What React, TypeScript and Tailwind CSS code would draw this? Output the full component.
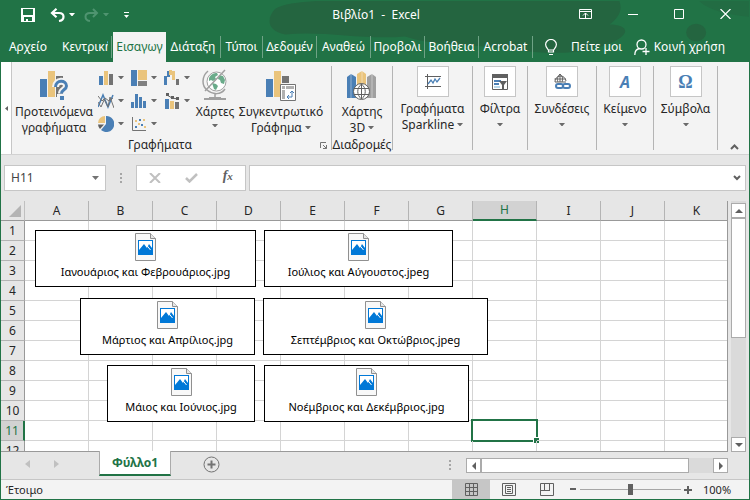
import { ReactNode, useState } from 'react';

interface SheetImage {
  name: string;
  place: string;
}

const columns = ['A', 'B', 'C', 'D', 'E', 'F', 'G', 'H', 'I', 'J', 'K'];
const rows = [1, 2, 3, 4, 5, 6, 7, 8, 9, 10, 11, 12];

const tabs = [
  { label: 'Διάταξη', width: 'w-[55px]' },
  { label: 'Τύποι', width: 'w-[42px]' },
  { label: 'Δεδομέν', width: 'w-[54px]' },
  { label: 'Αναθεώ', width: 'w-[54px]' },
  { label: 'Προβολι', width: 'w-[54px]' },
  { label: 'Βοήθεια', width: 'w-[54px]' },
  { label: 'Acrobat', width: 'w-[54px]' },
];

// Embedded files, placed freely over the cells
const images: SheetImage[] = [
  { name: 'Ιανουάριος και Φεβρουάριος.jpg', place: 'left-[34px] top-[29px] w-[221px]' },
  { name: 'Ιούλιος και Αύγουστος.jpeg', place: 'left-[263px] top-[29px] w-[189px]' },
  { name: 'Μάρτιος και Απρίλιος.jpg', place: 'left-[79px] top-[97px] w-[175px]' },
  { name: 'Σεπτέμβριος και Οκτώβριος.jpeg', place: 'left-[262px] top-[97px] w-[225px]' },
  { name: 'Μάιος και Ιούνιος.jpg', place: 'left-[106px] top-[164px] w-[148px]' },
  { name: 'Νοέμβριος και Δεκέμβριος.jpg', place: 'left-[263px] top-[164px] w-[205px]' },
];

function Caret({ className = 'text-[#6a6a6a]' }: { className?: string }) {
  return (
    <svg width="6" height="4" viewBox="0 0 6 4" className={`inline-block shrink-0 ${className}`}>
      <path d="M0 0h6L3.500 3h-1z" fill="currentColor" />
    </svg>
  );
}

function FileIcon() {
  return (
    <svg width="21" height="28" viewBox="0 0 21 28">
      <path d="M.5.5h15l5 5v22H.5z" fill="#f8f8f8" stroke="#909090" />
      <path d="M15.5.5v5h5" fill="#e6e6e6" stroke="#909090" />
      <path d="M3 7h15v15H3z" fill="#0078d7" />
      <path d="M4 8h13v9H4z" fill="#fff" />
      <path d="m4 17 5-6 3 4 2-4 3 4v3H4z" fill="#0078d7" />
      <path d="m11.500 12 4 5" stroke="#fff" />
    </svg>
  );
}

function SmallChart({ label, children }: { label: string; children: ReactNode }) {
  return (
    <button type="button" aria-label={label} className="flex h-[23px] w-[33px] items-center gap-1">
      <svg width="16" height="16" viewBox="0 0 16 16" fill="none">
        {children}
      </svg>
      <Caret />
    </button>
  );
}

function BoxedGroup({ label, width, children }: { label: string; width: string; children: ReactNode }) {
  return (
    <div className={`my-1 shrink-0 border-r border-[#b4b4b4] ${width}`}>
      <button type="button" className="flex w-full flex-col items-center">
        <span className="flex h-[31px] w-8 items-center justify-center border border-[#c6c6c6] bg-white">
          {children}
        </span>
        <span className="mt-1 leading-4">{label}</span>
        <Caret className="mt-[6px] text-[#6a6a6a]" />
      </button>
    </div>
  );
}

function ScrollButton({ label, path, className }: { label: string; path: string; className: string }) {
  return (
    <button
      type="button"
      aria-label={label}
      className={`flex size-[15px] shrink-0 items-center justify-center border border-[#ababab] bg-white ${className}`}
    >
      <svg width="8" height="8" viewBox="0 0 8 8" fill="#606060">
        <path d={path} />
      </svg>
    </button>
  );
}

function TitleBar() {
  return (
    <div className="relative flex h-[31px] items-center">
      <div className="flex flex-1 items-center pl-5 pb-1">
        <button type="button" aria-label="Αποθήκευση">
          <svg width="14" height="14" viewBox="0 0 14 14" fill="#fff">
            <path fillRule="evenodd" d="M0 0h14v14H0zM2 1v6h10V1zM3 9v4h2v-2h2v2h4V9z" />
          </svg>
        </button>
        <button type="button" aria-label="Αναίρεση" className="ml-[15px] flex items-center gap-1">
          <svg width="15" height="14" viewBox="0 0 15 14" fill="none" stroke="#fff" strokeWidth="2.200">
            <path d="M6.500.8 2 5l4.500 4.200" />
            <path d="M2 5h7c6 0 6 7 0 8" />
          </svg>
          <Caret className="text-white" />
        </button>
        <button type="button" aria-label="Επανάληψη" className="ml-[9px] flex items-center gap-1">
          <svg width="15" height="14" viewBox="0 0 15 14" fill="none" stroke="#4f9470" strokeWidth="2">
            <path d="m9 1 4 4-4 4" />
            <path d="M13 5H6C0 5 0 12 6 13" />
          </svg>
          <Caret className="text-[#4f9470]" />
        </button>
        <button type="button" aria-label="Προσαρμογή" className="ml-[15px]">
          <svg width="5" height="6" viewBox="0 0 5 6" fill="#fff">
            <path d="M0 0h5v1H0zM0 3h5L2.500 6z" />
          </svg>
        </button>
      </div>
      <h1 className="pb-1 text-xs">Βιβλίο1&nbsp; -&nbsp; Excel</h1>
      <div className="flex flex-1 items-center justify-end gap-9 pr-[18px] pb-[5px]">
        <button type="button" aria-label="Επιλογές κορδέλας">
          <svg width="13" height="10" viewBox="0 0 13 10" fill="none" stroke="#fff">
            <path d="M.5.5h12v9H.5zM0 2.500h13M6.500 4v5M4 6.500 6.500 4 9 6.500" />
          </svg>
        </button>
        <button type="button" aria-label="Ελαχιστοποίηση">
          <svg width="10" height="10" viewBox="0 0 10 10" stroke="#fff">
            <path d="M0 5.500h10" />
          </svg>
        </button>
        <button type="button" aria-label="Μεγιστοποίηση">
          <svg width="10" height="10" viewBox="0 0 10 10" fill="none" stroke="#fff">
            <path d="M.5.5h9v9h-9z" />
          </svg>
        </button>
        <button type="button" aria-label="Κλείσιμο">
          <svg width="11" height="10" viewBox="0 0 11 10" stroke="#fff" strokeWidth="1.200">
            <path d="m.5 0 10 10M10.500 0l-10 10" />
          </svg>
        </button>
      </div>
    </div>
  );
}

function RibbonTabs() {
  return (
    <div className="relative flex h-[30px] items-stretch">
      <button type="button" className="w-[54px] shrink-0">Αρχείο</button>
      <button type="button" className="my-1 mr-px w-[57px] shrink-0 border-r border-[#6fa386] pl-[7px] text-left">
        <span className="block w-[46px] overflow-hidden whitespace-nowrap">Κεντρική</span>
      </button>
      <button type="button" className="w-[53px] shrink-0 bg-[#f3f3f3] text-[#217346]">Εισαγωγ</button>
      {tabs.map((tab) => (
        <button
          key={tab.label}
          type="button"
          className={`my-1 shrink-0 border-r border-[#6fa386] ${tab.width}`}
        >
          {tab.label}
        </button>
      ))}
      <button type="button" className="ml-3 flex shrink-0 items-center gap-[14px]">
        <svg width="12" height="17" viewBox="0 0 12 17" fill="none" stroke="#fff" strokeWidth="1.200">
          <path d="M3.500 13v-2C2 9 .6 8 .6 5.500a5.400 5 0 0 1 10.800 0C11.400 8 10 9 8.500 11v2zM3.500 11h5M4 15.500h4" />
        </svg>
        Πείτε μοι
      </button>
      <button type="button" className="ml-auto mr-6 flex shrink-0 items-center gap-1">
        <svg width="16" height="17" viewBox="0 0 16 17" fill="none" stroke="#fff" strokeWidth="1.300">
          <circle cx="7.500" cy="5.500" r="4.500" />
          <path d="M.8 16c0-4 2-6 4.700-6.500M12 9v7M8.500 12.500h7" />
        </svg>
        Κοινή χρήση
      </button>
    </div>
  );
}

function Ribbon() {
  return (
    <div className="flex h-[93px] shrink-0 border-b border-[#d2d2d2] bg-[#f3f3f3] text-xs text-[#262626]">
      <button
        type="button"
        aria-label="Κύλιση αριστερά"
        className="flex w-[11px] shrink-0 items-center justify-center border-r border-[#c6c6c6] bg-white"
      >
        <svg width="3" height="5" viewBox="0 0 3 5" fill="#606060">
          <path d="M3 0v5L0 2.500z" />
        </svg>
      </button>

      {/* Γραφήματα */}
      <div className="my-1 flex w-80 shrink-0 flex-col border-r border-[#b4b4b4]">
        <div className="flex flex-1">
          <button type="button" className="flex w-[84px] flex-col items-center pt-[5px]">
            <svg width="28" height="29" viewBox="0 0 28 29">
              <path d="M0 8h7v18H0z" fill="#4a7fb5" />
              <path d="M8 0h7v26H8z" fill="#eac47c" />
              <path d="M16 5h7v21h-7z" fill="#737373" />
              <path
                d="M15.500 16c0-7.500 11-7.500 11-1 0 4-5 3.500-5 7.500"
                fill="none"
                stroke="#f3f3f3"
                strokeWidth="7"
              />
              <path d="M17 23h8v6h-8z" fill="#f3f3f3" />
              <path
                d="M15.500 16c0-7.500 11-7.500 11-1 0 4-5 3.500-5 7.500"
                fill="none"
                stroke="#4a7fb5"
                strokeWidth="3"
              />
              <path d="M20 25h4v4h-4z" fill="#4a7fb5" />
            </svg>
            <span className="mt-1 leading-4">
              Προτεινόμενα
              <br />
              γραφήματα
            </span>
          </button>
          <div className="ml-[2px] grid h-[69px] grid-cols-3 content-start">
            <SmallChart label="Στήλες">
              <path d="M1 6h4v9H1z" fill="#4a7fb5" />
              <path d="M6 1h4v14H6z" fill="#eac47c" />
              <path d="M11 4h4v11h-4z" fill="#737373" />
            </SmallChart>
            <SmallChart label="Ιεραρχία">
              <path d="M0 0h6v16H0z" fill="#4a7fb5" />
              <path d="M7 0h9v10H7z" fill="#eac47c" />
              <path d="M7 11h9v5H7z" fill="#808080" />
            </SmallChart>
            <SmallChart label="Καταρράκτης">
              <path d="M0 6h3v9H0zM3 1h3v6H3z" fill="#4a7fb5" />
              <path d="M5 0h3v5H5zM8 1h3v9H8z" fill="#eac47c" />
              <path d="M12 9h3v6h-3z" fill="#737373" />
            </SmallChart>
            <SmallChart label="Γραμμές">
              <path d="m0 14 5-12 5 12 5-12" stroke="#4a7fb5" strokeWidth="1.500" />
              <path d="m0 3 4 5 2-2 4 8 2-10 4 11M0 9l3 5 4-9 4 3 4-3" stroke="#737373" />
            </SmallChart>
            <SmallChart label="Στατιστική">
              <path d="M0 9h3v6H0zM4 1h3v14H4zM8 4h3v11H8zM12 8h3v7h-3z" fill="#4a7fb5" />
            </SmallChart>
            <SmallChart label="Συνδυασμός">
              <path d="M1 6h4v10H1z" fill="#4a7fb5" />
              <path d="M6 8h4v8H6z" fill="#eac47c" />
              <path d="M11 9h4v7h-4z" fill="#737373" />
              <path d="m3 2 5 3 6 1" stroke="#606060" />
              <path d="M2 0h3v3H2zM7 3h3v3H7zM12 4h3v3h-3z" fill="#606060" />
            </SmallChart>
            <SmallChart label="Πίτα">
              <path d="M8 8V0a8 8 0 1 1-5 14z" fill="#4a7fb5" />
              <path d="M7 7H0a7 7 0 0 1 7-7z" fill="#eac47c" />
              <path d="M6 8.500 2 13a8 8 0 0 1-2-4.500z" fill="#606060" />
            </SmallChart>
            <SmallChart label="Διασπορά">
              <path d="M1.500 1v13.500H15" stroke="#737373" />
              <path d="M4 10h2v2H4zM8 3h2v2H8zM10 8h2v2h-2z" fill="#4a7fb5" />
              <path d="M4 4h2v2H4zM7 7h2v2H7zM12 3h2v2h-2zM13 10h2v2h-2z" fill="#eac47c" />
            </SmallChart>
          </div>
          <button type="button" className="flex w-9 flex-col items-center pt-[3px]">
            <svg width="26" height="32" viewBox="0 0 26 32" fill="none">
              <circle cx="14.500" cy="12.500" r="9.500" fill="#fff" stroke="#a0a0a0" />
              <path
                d="M7 9c2-4 5-5 8-5l1 2-3 2 1 2-3 2-2-1-2 1zM17 6l4 1 2 4-1 4-3-1-1-3-2-1zM10 14l4 1 2 2-2 4-2-1z"
                fill="#6aab8a"
              />
              <path
                d="M23 1 3 22M6 2C-1 8 0 17 5 21c6 5 14 5 18-1M13 24v5"
                stroke="#a0a0a0"
                strokeWidth="1.500"
              />
              <path d="M7 28h12v1h5v2H2v-2h5z" fill="#a0a0a0" />
            </svg>
            <span className="mt-[3px] leading-4">Χάρτες</span>
            <Caret className="mt-1 text-[#6a6a6a]" />
          </button>
          <button type="button" className="flex w-24 flex-col items-center pt-[5px]">
            <svg width="30" height="30" viewBox="0 0 30 30">
              <path d="M0 8h7v18H0z" fill="#4a7fb5" />
              <path d="M8 0h7v26H8z" fill="#eac47c" />
              <path d="M16 5h7v7h-7z" fill="#737373" />
              <path d="M14.500 13.500h15v16h-15z" fill="#fff" stroke="#737373" />
              <path d="M16 15h3v3h-3zM20 15h8v3h-8zM16 19h3v9h-3z" fill="#b0b0b0" />
              <path d="M21 26h5v-5M23 24l-2 2 2 2M24 22l2-2 2 2" fill="none" stroke="#4a7fb5" />
            </svg>
            <span className="mt-[3px] whitespace-nowrap leading-4">
              Συγκεντρωτικό
              <br />
              Γράφημα <Caret className="mb-[2px] text-[#6a6a6a]" />
            </span>
          </button>
        </div>
        <div className="flex h-[10px] items-center">
          <span className="flex-1 pr-3 text-center leading-4">Γραφήματα</span>
          <button type="button" aria-label="Όλα τα γραφήματα" className="mr-1">
            <svg width="7" height="7" viewBox="0 0 7 7" fill="none" stroke="#737373">
              <path d="M.5 6V.5H6M3 3l3.500 3.500M6.500 3v3.500H3" />
            </svg>
          </button>
        </div>
      </div>

      {/* Διαδρομές */}
      <div className="my-1 flex w-[61px] shrink-0 flex-col items-center border-r border-[#b4b4b4]">
        <button type="button" className="flex flex-1 flex-col items-center pt-[5px]">
          <svg width="30" height="29" viewBox="0 0 30 29">
            <path d="M0 6 4 3l5 3v21H0z" fill="#4a7fb5" />
            <path d="m10 3 5-3 4 3v24h-9z" fill="#eac47c" />
            <path d="m20 6 5-3 4 3v21h-9z" fill="#a0a0a0" />
            <path d="M4 3v24M25 3v24M15 0v24" stroke="#fff" strokeOpacity=".4" />
            <circle cx="14.500" cy="20.500" r="8" fill="#fff" stroke="#606060" />
            <path
              d="M7 17.500h15M7 23.500h15M14.500 13v15M14.500 13c-5 4-5 11 0 15M14.500 13c5 4 5 11 0 15"
              fill="none"
              stroke="#606060"
            />
          </svg>
          <span className="mt-1 leading-4">
            Χάρτης
            <br />
            3D <Caret className="mb-[2px] text-[#6a6a6a]" />
          </span>
        </button>
        <span className="leading-[10px]">Διαδρομές</span>
      </div>

      <div className="my-1 w-20 shrink-0 border-r border-[#b4b4b4]">
        <button type="button" className="flex w-full flex-col items-center">
          <span className="flex h-[31px] w-8 items-center justify-center border border-[#c6c6c6] bg-white">
            <svg width="16" height="15" viewBox="0 0 16 15" fill="none" stroke="#606060">
              <path d="M2.500 0v15M0 2.500h16M0 12.500h16" />
              <path d="m3 10 3-4 2 3 2-4 2 3 3-4" stroke="#4a7fb5" strokeWidth="1.300" />
            </svg>
          </span>
          <span className="mt-1 leading-4">
            Γραφήματα
            <br />
            Sparkline <Caret className="mb-[2px] text-[#6a6a6a]" />
          </span>
        </button>
      </div>

      <BoxedGroup label="Φίλτρα" width="w-[55px]">
        <svg width="16" height="16" viewBox="0 0 16 16">
          <path d="M.5.5h15v15H.5z" fill="#fff" stroke="#606060" />
          <path d="M0 0h16v4H0z" fill="#606060" />
          <path d="M2 6h7v2H2zM2 9h5v2H2z" fill="#4a7fb5" />
          <path d="M2 12h6v2H2z" fill="#b8d8ea" />
          <path d="M7 7h8l-3 4v4h-2v-4z" fill="#606060" />
        </svg>
      </BoxedGroup>
      <BoxedGroup label="Συνδέσεις" width="w-[69px]">
        <svg width="17" height="17" viewBox="0 0 17 17" fill="none" stroke="#606060">
          <path d="M1 9a5.500 5.500 0 1 1 11-1M.5 6h11M1 9h11M6 1v8M6 1C3 4 3 7 4 9M6 1c3 3 3 5 2 8" />
          <rect x="2" y="11" width="7" height="4" rx="2" stroke="#4a7fb5" strokeWidth="2" />
          <rect x="9" y="11" width="7" height="4" rx="2" stroke="#4a7fb5" strokeWidth="2" />
        </svg>
      </BoxedGroup>
      <BoxedGroup label="Κείμενο" width="w-[57px]">
        <span className="text-base font-bold italic leading-4 text-[#4a7fb5]">A</span>
      </BoxedGroup>
      <BoxedGroup label="Σύμβολα" width="w-16">
        <span className="font-['Liberation_Serif',serif] text-lg font-bold leading-4 text-[#4a7fb5]">Ω</span>
      </BoxedGroup>
      <button type="button" aria-label="Σύμπτυξη κορδέλας" className="mt-auto mr-[10px] mb-1 ml-auto">
        <svg width="9" height="6" viewBox="0 0 9 6" fill="none" stroke="#606060" strokeWidth="2">
          <path d="m1 5 3.500-3.500L8 5" />
        </svg>
      </button>
    </div>
  );
}

function FormulaBar() {
  return (
    <div className="flex h-[46px] shrink-0 items-start px-[3px] pt-[10px] text-[#444]">
      <div className="flex h-[26px] w-[102px] shrink-0 items-center border border-[#c6c6c6] bg-white px-[6px]">
        <input
          aria-label="Πλαίσιο ονόματος"
          defaultValue="H11"
          className="w-full min-w-0 bg-transparent text-xs outline-none"
        />
        <button type="button" aria-label="Ονόματα">
          <svg width="7" height="4" viewBox="0 0 7 4" fill="#737373">
            <path d="M0 0h7L3.500 4z" />
          </svg>
        </button>
      </div>
      <div className="flex h-[26px] w-[30px] shrink-0 flex-col items-center justify-center gap-[2px]">
        <span className="size-[2px] bg-[#a6a6a6]" />
        <span className="size-[2px] bg-[#a6a6a6]" />
        <span className="size-[2px] bg-[#a6a6a6]" />
      </div>
      <div className="flex h-[26px] w-[110px] shrink-0 items-center justify-around border border-[#c6c6c6] bg-white">
        <button type="button" aria-label="Άκυρο">
          <svg width="12" height="10" viewBox="0 0 12 10" stroke="#c0c0c0" strokeWidth="2">
            <path d="m1 0 10 10M11 0 1 10" />
          </svg>
        </button>
        <button type="button" aria-label="Εισαγωγή">
          <svg width="13" height="10" viewBox="0 0 13 10" fill="none" stroke="#c0c0c0" strokeWidth="2.500">
            <path d="m1 5 3.500 3.500L12 1" />
          </svg>
        </button>
        <button
          type="button"
          aria-label="Εισαγωγή συνάρτησης"
          className="pb-1 font-['Liberation_Serif',serif] text-sm font-bold italic leading-4 text-[#606060]"
        >
          f<span className="text-[11px]">x</span>
        </button>
      </div>
      <div className="ml-[3px] flex h-[26px] flex-1 items-center border border-[#c6c6c6] bg-white pr-1">
        <input aria-label="Γραμμή τύπων" className="min-w-0 flex-1 bg-transparent px-1 text-xs outline-none" />
        <button type="button" aria-label="Ανάπτυξη">
          <svg width="8" height="6" viewBox="0 0 8 6" fill="none" stroke="#606060" strokeWidth="2">
            <path d="m1 1 3 3 3-3" />
          </svg>
        </button>
      </div>
    </div>
  );
}

function Sheet() {
  return (
    <div className="flex min-h-0 flex-1 pr-[3px]">
      <div className="relative flex-1 overflow-hidden border-r border-b border-[#999] bg-white">
        <table className="border-separate border-spacing-0 text-xs leading-4 text-[#262626]">
          <thead>
            <tr>
              <th className="h-5 w-6 min-w-6 border-r border-b border-r-[#c0c0c0] border-b-[#999] bg-[#e6e6e6] p-0">
                <svg width="12" height="12" viewBox="0 0 12 12" className="ml-2" fill="#b4b4b4">
                  <path d="M12 0v12H0z" />
                </svg>
              </th>
              {columns.map((col) => (
                <th
                  key={col}
                  scope="col"
                  className={`h-5 w-16 min-w-16 border-r border-r-[#b4b4b4] p-0 text-center font-normal ${
                    col === 'H'
                      ? 'border-b-2 border-b-[#217346] bg-[#d2d2d2] text-[#217346]'
                      : 'border-b border-b-[#999] bg-[#e6e6e6]'
                  }`}
                >
                  {col}
                </th>
              ))}
            </tr>
          </thead>
          <tbody>
            {rows.map((row) => (
              <tr key={row}>
                <th
                  scope="row"
                  className={`h-5 border-b border-b-[#b4b4b4] p-0 text-center font-normal ${
                    row === 11
                      ? 'border-r-2 border-r-[#217346] bg-[#d2d2d2] text-[#217346]'
                      : 'border-r border-r-[#999] bg-[#e6e6e6]'
                  }`}
                >
                  {row}
                </th>
                {columns.map((col) => (
                  <td key={col} className="relative h-5 border-r border-b border-[#d4d4d4] p-0">
                    {col === 'H' && row === 11 && (
                      <>
                        <span className="absolute -inset-[2px] border-2 border-[#217346]" />
                        <span className="absolute -right-[3px] -bottom-[3px] size-[6px] border-t border-l border-white bg-[#217346]" />
                      </>
                    )}
                  </td>
                ))}
              </tr>
            ))}
          </tbody>
        </table>

        {images.map((image) => (
          <figure
            key={image.name}
            className={`absolute flex h-[57px] flex-col items-center border border-black bg-white pt-[2px] ${image.place}`}
          >
            <FileIcon />
            <figcaption className="mt-[3px] whitespace-nowrap text-[11px] leading-4 text-black">
              {image.name}
            </figcaption>
          </figure>
        ))}
      </div>

      <div className="ml-[3px] flex w-[15px] flex-col bg-[#dadada] pt-[2px]">
        <ScrollButton label="Πάνω" path="M0 6h8L4 2z" className="" />
        <div className="h-[120px] border border-[#ababab] bg-white" />
        <ScrollButton label="Κάτω" path="M0 2h8L4 6z" className="mt-auto" />
      </div>
    </div>
  );
}

function SheetTabs() {
  return (
    <div className="flex h-[27px] shrink-0 items-start pr-[21px]">
      <button type="button" aria-label="Προηγούμενο φύλλο" className="mt-2 ml-6">
        <svg width="5" height="8" viewBox="0 0 5 8" fill="#c0c0c0">
          <path d="M5 0v8L0 4z" />
        </svg>
      </button>
      <button type="button" aria-label="Επόμενο φύλλο" className="mt-2 ml-6">
        <svg width="5" height="8" viewBox="0 0 5 8" fill="#c0c0c0">
          <path d="M0 0v8l5-4z" />
        </svg>
      </button>
      <button
        type="button"
        className="relative -mt-px ml-10 h-[25px] w-[72px] border-x border-b-2 border-x-[#ababab] border-b-[#217346] bg-white text-xs font-bold leading-5 text-[#217346]"
      >
        Φύλλο1
      </button>
      <button type="button" aria-label="Νέο φύλλο" className="mt-1 ml-8">
        <svg width="17" height="17" viewBox="0 0 17 17" fill="none" stroke="#737373">
          <circle cx="8.500" cy="8.500" r="7.500" />
          <path d="M4.500 8.500h8M8.500 4.500v8" strokeWidth="2" />
        </svg>
      </button>
      <div className="mt-2 mr-[15px] ml-auto flex flex-col gap-[2px]">
        <span className="size-[2px] bg-[#a6a6a6]" />
        <span className="size-[2px] bg-[#a6a6a6]" />
        <span className="size-[2px] bg-[#a6a6a6]" />
      </div>
      <div className="mt-[6px] flex w-[262px] bg-[#dadada]">
        <ScrollButton label="Αριστερά" path="M6 0v8L2 4z" className="" />
        <div className="w-[208px] border border-[#ababab] bg-white" />
        <ScrollButton label="Δεξιά" path="M2 0v8l4-4z" className="ml-auto" />
      </div>
    </div>
  );
}

function StatusBar() {
  const [zoom, setZoom] = useState(100);

  return (
    <div className="flex h-5 shrink-0 items-stretch border-t border-[#c6c6c6] bg-[#f3f3f3] pr-[18px] text-[11px] text-[#262626]">
      <span className="mr-auto self-center pl-[5px] leading-4">Έτοιμο</span>
      <button type="button" aria-label="Κανονική" className="flex w-[38px] items-center justify-center bg-[#c6c6c6]">
        <svg width="13" height="13" viewBox="0 0 13 13" fill="none" stroke="#606060">
          <path d="M.5.5h12v12H.5zM4.500 0v13M8.500 0v13M0 4.500h13M0 8.500h13" />
        </svg>
      </button>
      <button type="button" aria-label="Διάταξη σελίδας" className="flex w-[38px] items-center justify-center">
        <svg width="14" height="13" viewBox="0 0 14 13" fill="none" stroke="#606060">
          <path d="M.5.5h13v12H.5zM3.500 2.500h7v8h-7zM5 4.500h4M5 6.500h4M5 8.500h4" />
        </svg>
      </button>
      <button type="button" aria-label="Αλλαγές σελίδας" className="flex w-[38px] items-center justify-center">
        <svg width="14" height="13" viewBox="0 0 14 13" fill="none" stroke="#606060">
          <path d="M.5.5h13v12H.5zM4.500 0v7.500M9.500 0v7.500M0 7.500h10" />
        </svg>
      </button>
      <button type="button" aria-label="Σμίκρυνση" className="ml-1" onClick={() => setZoom(zoom - 10)}>
        <svg width="7" height="9" viewBox="0 0 7 9" fill="#606060">
          <path d="M0 3h6v2H0z" />
        </svg>
      </button>
      <input
        type="range"
        aria-label="Ζουμ"
        min={0}
        max={200}
        value={zoom}
        onChange={(e) => setZoom(Number(e.target.value))}
        className="mx-[3px] h-px w-[101px] appearance-none self-center bg-[#a6a6a6] [&::-webkit-slider-thumb]:h-[11px] [&::-webkit-slider-thumb]:w-[5px] [&::-webkit-slider-thumb]:appearance-none [&::-webkit-slider-thumb]:bg-[#606060]"
      />
      <button type="button" aria-label="Μεγέθυνση" onClick={() => setZoom(zoom + 10)}>
        <svg width="8" height="8" viewBox="0 0 8 8" fill="#606060">
          <path d="M3 0h2v3h3v2H5v3H3V5H0V3h3z" />
        </svg>
      </button>
      <span className="ml-[11px] w-7 self-center text-right leading-4">{zoom}%</span>
    </div>
  );
}

export default function App() {
  return (
    <div className="flex h-screen w-full flex-col overflow-hidden border border-[#217346] bg-[#e6e6e6] font-['Noto_Sans','Open_Sans',sans-serif]">
      <header className="relative shrink-0 bg-[#217346] text-xs text-white">
        <svg
          className="absolute inset-0 size-full"
          viewBox="0 0 750 62"
          preserveAspectRatio="none"
          fill="#246540"
        >
          <path d="M275 8c18-12 90-8 120-8h225c4 10-2 18-10 24 14 0 22 6 10 14-22 14-60 18-100 12-60-8-85-4-115-14-40 4-80-6-120-2-20-4-18-18-10-26z" />
          <ellipse cx="697" cy="32" rx="10" ry="9" />
          <path d="M700 0h50v16c-20-2-40-6-50-16z" fill="#226c43" />
        </svg>
        <TitleBar />
        <RibbonTabs />
      </header>
      <Ribbon />
      <FormulaBar />
      <Sheet />
      <SheetTabs />
      <StatusBar />
    </div>
  );
}
